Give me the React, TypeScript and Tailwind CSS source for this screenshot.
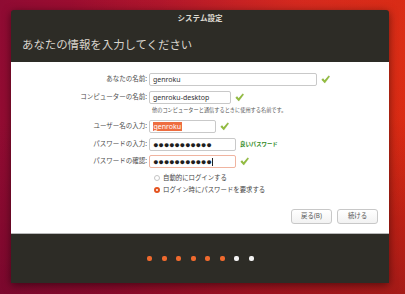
import React from 'react';

const Check = () => (
  <svg width="9" height="9" viewBox="0 0 10 10" className="shrink-0">
    <path d="M0.8 5.2 L2.4 4 L4 6.2 L8.6 0.8 L9.6 1.8 L4.2 9 Z" fill="#93bf3a" stroke="#6f9a22" strokeWidth="0.4" strokeLinejoin="round" />
  </svg>
);

const Row: React.FC<{ label: string; width: string; children: React.ReactNode; after?: React.ReactNode; focused?: boolean }> = ({
  label,
  width,
  children,
  after,
  focused,
}) => (
  <div className="flex items-center h-[13px]">
    <div className="w-[138px] shrink-0 text-right text-[6.5px] leading-none text-[#4c4c4c] pr-[2px]">{label}</div>
    <div
      className={`${width} h-[13px] shrink-0 rounded-[2px] border bg-white flex items-center px-[3px] ${
        focused ? 'border-[#f0b4a0]' : 'border-[#c9c9c9]'
      }`}
    >
      {children}
    </div>
    <div className="ml-[4px] flex items-center">{after}</div>
  </div>
);

const Dots = () => (
  <span className="font-['Liberation_Sans',sans-serif] text-[9.4px] leading-none text-[#1e1e1e] tracking-[-0.35px]">●●●●●●●●●●●</span>
);

export default function App() {
  const steps = [true, true, true, true, true, true, false, false];

  return (
    <div className="w-[405px] h-[294px] overflow-hidden relative bg-[linear-gradient(100deg,#8f0b33_0%,#a80f2c_35%,#c81b1c_65%,#d9290e_100%)] font-['Noto_Sans','Noto_Sans_CJK_JP',sans-serif]">
      <div className="absolute inset-0 bg-[linear-gradient(180deg,rgba(0,0,0,0)_40%,rgba(70,0,40,0.35)_100%)]" />
      <div className="absolute inset-0 bg-[radial-gradient(ellipse_at_75%_10%,rgba(255,90,40,0.25),rgba(0,0,0,0)_55%)]" />

      <div className="relative pt-[10px] pl-[11px]">
        <div className="w-[378px] h-[273px] flex flex-col bg-[#2d2c26] rounded-t-[3px] shadow-[0_2px_8px_rgba(0,0,0,0.5)]">
          {/* Title */}
          <div className="h-[17px] flex items-center justify-center text-[7.5px] font-bold text-[#dedad2]">システム設定</div>
          {/* Header */}
          <div className="h-[35px] flex items-center pl-[11px] text-[11.4px] text-[#d9d5cd] leading-none">
            あなたの情報を入力してください
          </div>

          {/* Body */}
          <div className="h-[172px] bg-white border-b border-[#b9b9b9] flex flex-col pt-[11px] pb-[9px] pr-[11px]">
            <Row label="あなたの名前:" width="w-[168px]" after={<Check />}>
              <span className="text-[7px] text-[#333] leading-none">genroku</span>
            </Row>
            <div className="mt-[5px]">
              <Row label="コンピューターの名前:" width="w-[82px]" after={<Check />}>
                <span className="text-[7px] text-[#333] leading-none">genroku-desktop</span>
              </Row>
            </div>
            <div className="mt-[3px] h-[8px] pl-[141px] flex items-center text-[5.2px] leading-none text-[#555]">
              他のコンピューターと通信するときに使用する名前です。
            </div>
            <div className="mt-[5px]">
              <Row label="ユーザー名の入力:" width="w-[67px]" after={<Check />}>
                <span className="text-[7px] leading-[9px] text-white bg-[#ee6d40] px-[0.5px]">genroku</span>
              </Row>
            </div>
            <div className="mt-[5px]">
              <Row
                label="パスワードの入力:"
                width="w-[87px]"
                after={<span className="text-[5.4px] font-bold text-[#2f8a1c] leading-none">良いパスワード</span>}
              >
                <Dots />
              </Row>
            </div>
            <div className="mt-[4px]">
              <Row label="パスワードの確認:" width="w-[87px]" after={<Check />} focused>
                <Dots />
                <span className="w-[0.6px] h-[8px] bg-[#222] ml-[0.5px]" />
              </Row>
            </div>

            <div className="mt-[6px] pl-[143px] flex flex-col gap-[4px]">
              <div className="h-[8px] flex items-center gap-[3px]">
                <span className="w-[6px] h-[6px] rounded-full border border-[#c4c4c4] bg-white" />
                <span className="text-[6.4px] leading-none text-[#444]">自動的にログインする</span>
              </div>
              <div className="h-[8px] flex items-center gap-[3px]">
                <span className="w-[6px] h-[6px] rounded-full border-[2px] border-[#e4531f] bg-white" />
                <span className="text-[6.4px] leading-none text-[#444]">ログイン時にパスワードを要求する</span>
              </div>
            </div>

            <div className="mt-auto flex justify-end gap-[5px]">
              <button className="w-[41px] h-[15px] rounded-[3px] border border-[#c8c8c8] bg-[linear-gradient(#ffffff,#f2f2f2)] text-[6.4px] text-[#555] leading-none">
                戻る(B)
              </button>
              <button className="w-[41px] h-[15px] rounded-[3px] border border-[#c8c8c8] bg-[linear-gradient(#ffffff,#f2f2f2)] text-[6.4px] text-[#555] leading-none">
                続ける
              </button>
            </div>
          </div>

          {/* Progress */}
          <div className="flex-1 flex items-center justify-center gap-[9.5px] pl-[1px]">
            {steps.map((done, i) => (
              <span key={i} className={`w-[5px] h-[5px] rounded-[2px] ${done ? 'bg-[#ef6a2e]' : 'bg-[#f2f2f2]'}`} />
            ))}
          </div>
        </div>
      </div>
    </div>
  );
}
